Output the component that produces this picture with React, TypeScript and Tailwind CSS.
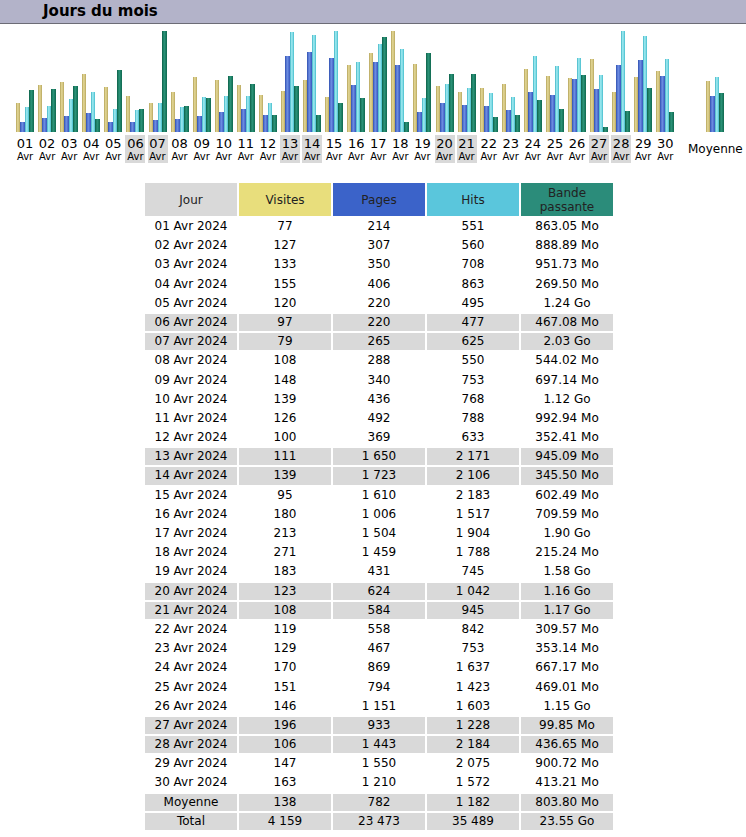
type Day = {
  d: string;
  visits: number;
  pages: number;
  hits: number;
  bw: string;
  we?: boolean;
};

const days: Day[] = [
  { d: "01", visits: 77, pages: 214, hits: 551, bw: "863.05 Mo" },
  { d: "02", visits: 127, pages: 307, hits: 560, bw: "888.89 Mo" },
  { d: "03", visits: 133, pages: 350, hits: 708, bw: "951.73 Mo" },
  { d: "04", visits: 155, pages: 406, hits: 863, bw: "269.50 Mo" },
  { d: "05", visits: 120, pages: 220, hits: 495, bw: "1.24 Go" },
  { d: "06", visits: 97, pages: 220, hits: 477, bw: "467.08 Mo", we: true },
  { d: "07", visits: 79, pages: 265, hits: 625, bw: "2.03 Go", we: true },
  { d: "08", visits: 108, pages: 288, hits: 550, bw: "544.02 Mo" },
  { d: "09", visits: 148, pages: 340, hits: 753, bw: "697.14 Mo" },
  { d: "10", visits: 139, pages: 436, hits: 768, bw: "1.12 Go" },
  { d: "11", visits: 126, pages: 492, hits: 788, bw: "992.94 Mo" },
  { d: "12", visits: 100, pages: 369, hits: 633, bw: "352.41 Mo" },
  { d: "13", visits: 111, pages: 1650, hits: 2171, bw: "945.09 Mo", we: true },
  { d: "14", visits: 139, pages: 1723, hits: 2106, bw: "345.50 Mo", we: true },
  { d: "15", visits: 95, pages: 1610, hits: 2183, bw: "602.49 Mo" },
  { d: "16", visits: 180, pages: 1006, hits: 1517, bw: "709.59 Mo" },
  { d: "17", visits: 213, pages: 1504, hits: 1904, bw: "1.90 Go" },
  { d: "18", visits: 271, pages: 1459, hits: 1788, bw: "215.24 Mo" },
  { d: "19", visits: 183, pages: 431, hits: 745, bw: "1.58 Go" },
  { d: "20", visits: 123, pages: 624, hits: 1042, bw: "1.16 Go", we: true },
  { d: "21", visits: 108, pages: 584, hits: 945, bw: "1.17 Go", we: true },
  { d: "22", visits: 119, pages: 558, hits: 842, bw: "309.57 Mo" },
  { d: "23", visits: 129, pages: 467, hits: 753, bw: "353.14 Mo" },
  { d: "24", visits: 170, pages: 869, hits: 1637, bw: "667.17 Mo" },
  { d: "25", visits: 151, pages: 794, hits: 1423, bw: "469.01 Mo" },
  { d: "26", visits: 146, pages: 1151, hits: 1603, bw: "1.15 Go" },
  { d: "27", visits: 196, pages: 933, hits: 1228, bw: "99.85 Mo", we: true },
  { d: "28", visits: 106, pages: 1443, hits: 2184, bw: "436.65 Mo", we: true },
  { d: "29", visits: 147, pages: 1550, hits: 2075, bw: "900.72 Mo" },
  { d: "30", visits: 163, pages: 1210, hits: 1572, bw: "413.21 Mo" },
];

// numbers in the table use a space as thousands separator
const fmt = (n: number) => n.toString().replace(/\B(?=(\d{3})+(?!\d))/g, " ");

const toMo = (s: string) => {
  const [v, unit] = s.split(" ");
  return unit === "Go" ? parseFloat(v) * 1024 : parseFloat(v);
};

const H = 101;
const maxVisits = Math.max(...days.map((x) => x.visits));
const maxHits = Math.max(...days.map((x) => x.hits));
const maxBw = Math.max(...days.map((x) => toMo(x.bw)));

function Bars(props: { visits: number; pages: number; hits: number; bw: number }) {
  const h = (v: number, max: number) => Math.max(1, Math.round((v / max) * H));
  return (
    <div className="h-[101px] flex items-end">
      <div
        className="w-[4px] bg-[linear-gradient(to_right,#b3a25a,#e6da98_45%,#b8a75e)]"
        style={{ height: h(props.visits, maxVisits) }}
      />
      <div
        className="w-[5px] bg-[linear-gradient(to_right,#2f4fb0,#6f8fe4_45%,#3556bc)]"
        style={{ height: h(props.pages, maxHits) }}
      />
      <div
        className="w-[4px] bg-[linear-gradient(to_right,#3fb3c4,#a4eef4_45%,#45bccc)]"
        style={{ height: h(props.hits, maxHits) }}
      />
      <div
        className="w-[5px] bg-[linear-gradient(to_right,#0c6048,#2c957a_45%,#0f684f)]"
        style={{ height: h(props.bw, maxBw) }}
      />
    </div>
  );
}

function Row(props: { cells: string[]; gray?: boolean }) {
  return (
    <div className="flex gap-[2px]">
      {props.cells.map((c, i) => (
        <div
          key={i}
          className={
            props.gray
              ? "w-[92px] h-[17.2px] bg-[#d9d9d9] text-center text-[12px] leading-[17.2px]"
              : "w-[92px] h-[17.2px] text-center text-[12px] leading-[17.2px]"
          }
        >
          {c}
        </div>
      ))}
    </div>
  );
}

export default function App() {
  const avg = { visits: 138, pages: 782, hits: 1182, bw: 803.8 };

  return (
    <div className="w-[746px] h-[837px] overflow-hidden bg-white text-black font-['DejaVu_Sans',Verdana,sans-serif]">
      <div className="h-[24px] bg-[#b3b3c9] border-b border-[#6c6c76] pl-[43px] text-[15px] font-bold leading-[23px]">
        Jours du mois
      </div>

      <div className="flex pl-[14px] pt-[7px]">
        {days.map((x) => (
          <div key={x.d} className="w-[22.08px] shrink-0 flex flex-col items-center">
            <Bars visits={x.visits} pages={x.pages} hits={x.hits} bw={toMo(x.bw)} />
            <div
              className={
                x.we
                  ? "mt-[3px] w-[20px] h-[28px] pt-[1px] flex flex-col items-center bg-[#d9d9d9]"
                  : "mt-[3px] w-[20px] h-[28px] pt-[1px] flex flex-col items-center"
              }
            >
              <div className="text-[13px] leading-[15px]">{x.d}</div>
              <div className="text-[10px] leading-[12px]">Avr</div>
            </div>
          </div>
        ))}
        <div className="ml-[9px] w-[60px] shrink-0 flex flex-col items-center">
          <Bars {...avg} />
          <div className="mt-[3px] h-[28px] flex items-center text-[12px] leading-[14px]">Moyenne</div>
        </div>
      </div>

      <div className="mt-[20px] ml-[145px] flex flex-col gap-[2px]">
        <div className="flex gap-[2px] text-[12px] leading-[14px] text-[#222]">
          <div className="w-[92px] h-[33px] flex items-center justify-center bg-[#d9d9d9]">Jour</div>
          <div className="w-[92px] h-[33px] flex items-center justify-center bg-[#e8de7c]">Visites</div>
          <div className="w-[92px] h-[33px] flex items-center justify-center bg-[#3b63c9]">Pages</div>
          <div className="w-[92px] h-[33px] flex items-center justify-center bg-[#5ac6dc]">Hits</div>
          <div className="w-[92px] h-[33px] flex items-center justify-center text-center bg-[#2b8c7a]">
            Bande
            <br />
            passante
          </div>
        </div>
        {days.map((x) => (
          <Row
            key={x.d}
            gray={x.we}
            cells={[`${x.d} Avr 2024`, fmt(x.visits), fmt(x.pages), fmt(x.hits), x.bw]}
          />
        ))}
        <Row gray cells={["Moyenne", "138", "782", "1 182", "803.80 Mo"]} />
        <Row gray cells={["Total", "4 159", "23 473", "35 489", "23.55 Go"]} />
      </div>
    </div>
  );
}
